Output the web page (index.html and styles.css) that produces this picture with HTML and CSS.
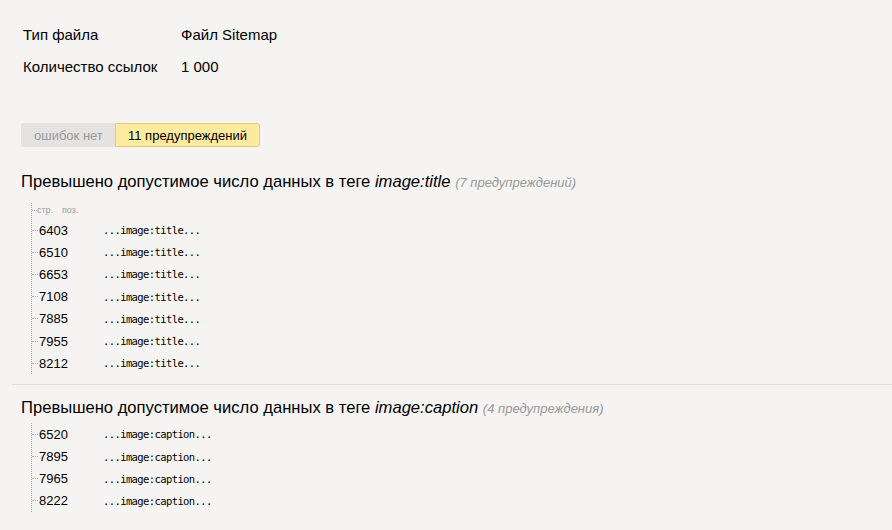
FILE: index.html
```html
<!DOCTYPE html>
<html lang="ru">
<head>
<meta charset="utf-8">
<link rel="stylesheet" href="styles.css">
</head>
<body>
<div class="page">
  <dl class="info">
    <div class="info-row"><dt>Тип файла</dt><dd>Файл Sitemap</dd></div>
    <div class="info-row"><dt>Количество ссылок</dt><dd>1 000</dd></div>
  </dl>

  <div class="tabs">
    <span class="tab tab-off">ошибок нет</span>
    <span class="tab tab-on">11 предупреждений</span>
  </div>

  <section class="group">
    <h2 class="group-title">Превышено допустимое число данных в теге <i>image:title</i> <span class="count">(7 предупреждений)</span></h2>
    <ul class="tree">
      <li class="tree-head"><span class="col-line">стр.</span><span class="col-pos">поз.</span></li>
      <li><span class="num">6403</span><code>...image:title...</code></li>
      <li><span class="num">6510</span><code>...image:title...</code></li>
      <li><span class="num">6653</span><code>...image:title...</code></li>
      <li><span class="num">7108</span><code>...image:title...</code></li>
      <li><span class="num">7885</span><code>...image:title...</code></li>
      <li><span class="num">7955</span><code>...image:title...</code></li>
      <li><span class="num">8212</span><code>...image:title...</code></li>
    </ul>
  </section>

  <section class="group group-sep">
    <h2 class="group-title">Превышено допустимое число данных в теге <i>image:caption</i> <span class="count">(4 предупреждения)</span></h2>
    <ul class="tree">
      <li><span class="num">6520</span><code>...image:caption...</code></li>
      <li><span class="num">7895</span><code>...image:caption...</code></li>
      <li><span class="num">7965</span><code>...image:caption...</code></li>
      <li><span class="num">8222</span><code>...image:caption...</code></li>
    </ul>
  </section>
</div>
</body>
</html>
```
FILE: styles.css
```css
html, body {
  margin: 0;
  padding: 0;
  background: #f5f4f2;
}
body {
  font-family: "Liberation Sans", Arial, sans-serif;
  color: #000;
  font-size: 14px;
}
.page {
  padding: 26px 0 0 0;
}
.info {
  margin: 0;
  padding: 0 0 0 23px;
  display: flex;
  flex-direction: column;
  gap: 15px;
  font-size: 15px;
}
.info-row {
  display: flex;
  line-height: 17px;
}
.info dt {
  width: 158px;
}
.info dd {
  margin: 0;
}
.tabs {
  margin: 48px 0 0 21px;
  display: flex;
  height: 24px;
}
.tab {
  display: flex;
  align-items: center;
  font-size: 13px;
  box-sizing: border-box;
  height: 24px;
  white-space: nowrap;
}
.tab-off {
  background: #e4e3e1;
  color: #999;
  padding: 0 0 0 13px;
  width: 94px;
  border-radius: 3px 0 0 3px;
}
.tab-on {
  background: #ffeba0;
  border: 1px solid #e6cc72;
  border-radius: 0 3px 3px 0;
  padding: 0 12px;
  width: 145px;
}
.group {
  padding-left: 21px;
}
.group-title {
  margin: 25px 0 0 0;
  font-size: 16.6px;
  font-weight: normal;
  line-height: 20px;
}
.group-title i {
  font-style: italic;
}
.count {
  font-size: 13px;
  color: #999;
  font-style: italic;
}
.tree {
  list-style: none;
  margin: 10px 0 0 10px;
  padding: 0;
  border-left: 1px dotted #b5b5b5;
}
.tree li {
  display: flex;
  align-items: center;
  height: 22.2px;
}
.tree li::before {
  content: "";
  width: 6px;
  border-top: 1px dotted #b5b5b5;
  margin-right: 1px;
}
.tree li.tree-head {
  height: 14px;
  font-size: 9px;
  color: #999;
  margin-bottom: 2px;
}
.tree li.tree-head::before {
  width: 5px;
  margin-right: 0;
}
.col-line {
  width: 25px;
}
.num {
  width: 64px;
  font-size: 13px;
}
code {
  font-family: "DejaVu Sans Mono", "Liberation Mono", monospace;
  font-size: 10.5px;
  letter-spacing: -0.6px;
  color: #000;
}
.group-sep {
  margin-top: 10px;
  border-top: 1px solid #e0dfdd;
  margin-left: 12px;
  padding-left: 9px;
}
.group-sep .group-title {
  margin-top: 13px;
}
.group-sep .tree {
  margin-top: 4px;
}
```
